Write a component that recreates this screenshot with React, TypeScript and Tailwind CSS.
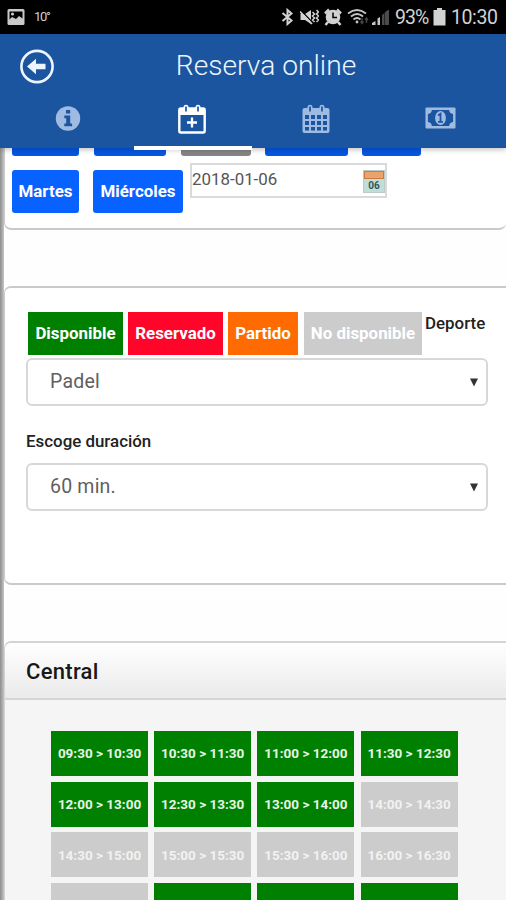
import type { ReactNode } from "react";

type SlotData = { label: string; free: boolean };

const SLOTS: SlotData[] = [
  { label: "09:30 > 10:30", free: true },
  { label: "10:30 > 11:30", free: true },
  { label: "11:00 > 12:00", free: true },
  { label: "11:30 > 12:30", free: true },
  { label: "12:00 > 13:00", free: true },
  { label: "12:30 > 13:30", free: true },
  { label: "13:00 > 14:00", free: true },
  { label: "14:00 > 14:30", free: false },
  { label: "14:30 > 15:00", free: false },
  { label: "15:00 > 15:30", free: false },
  { label: "15:30 > 16:00", free: false },
  { label: "16:00 > 16:30", free: false },
  { label: "", free: false },
  { label: "", free: true },
  { label: "", free: true },
  { label: "", free: true },
];

function StatusBar() {
  return (
    <div className="flex h-[34px] shrink-0 items-center bg-black text-[#d2d2d2]">
      <svg className="ml-[7px] h-[18px] w-[18px]" viewBox="0 0 18 18">
        <rect x="0.5" y="1" width="17" height="16" rx="1.5" fill="#c8c8c8" />
        <path d="M2.500 3.500h13v7l-3.500-2.500-3 3-4-2L2.500 11.500z" fill="#000" />
        <circle cx="5.500" cy="6" r="1.600" fill="#c8c8c8" />
      </svg>
      <span className="ml-[9px] w-[16px] whitespace-nowrap text-[13px] leading-[34px] tracking-[-1.3px]">10°</span>
      <div className="ml-auto flex items-center">
        <svg className="h-[18px] w-[13px]" viewBox="0 0 13 18" fill="none" stroke="#d2d2d2" strokeWidth="2">
          <path d="M1.500 5l9 7.500L6.500 16V2l4 3.500L1.500 13" />
        </svg>
        <svg className="ml-[6px] h-[18px] w-[19px]" viewBox="0 0 19 18">
          <path d="M0.500 6h4.500L11 2v14L5 12H0.500z" fill="#d2d2d2" />
          <path d="M1 2.500l12 12.500" stroke="#000" strokeWidth="1.300" />
          <path d="M0 3.500l12 12.500" stroke="#d2d2d2" strokeWidth="1.700" />
          <path d="M12.500 4l2 2-2 2 2 2-2 2 2 2M16.500 2l2 2-2 2 2 2-2 2 2 2-2 2" fill="none" stroke="#d2d2d2" strokeWidth="1.500" />
        </svg>
        <svg className="ml-[5px] h-[18px] w-[18px]" viewBox="0 0 18 18" fill="none">
          <path d="M1 5.500L5 1.500M17 5.500l-4-4M4 14l-2.500 3M14 14l2.500 3" stroke="#d2d2d2" strokeWidth="2.500" />
          <circle cx="9" cy="9" r="7.300" fill="#d2d2d2" />
          <path d="M9 4.500V9.500h4" stroke="#000" strokeWidth="1.500" />
        </svg>
        <svg className="ml-[5px] h-[18px] w-[23px]" viewBox="0 0 23 18" fill="none" stroke="#c6c6c6" strokeWidth="1.800">
          <path d="M1 5.500Q10 -1.500 19 5.500M4 8.500Q10 3.500 16 8.500M6.500 11.500Q10 8.500 13.500 11.500" />
          <circle cx="10" cy="14" r="1.400" fill="#c6c6c6" stroke="none" />
          <path d="M15 10v5M13.500 13.500L15 15.500l1.500-2M19.500 15V10M18 12l1.500-2 1.500 2" stroke="#444" strokeWidth="1.400" />
        </svg>
        <svg className="ml-[2px] h-[17px] w-[18px]" viewBox="0 0 18 17">
          <path d="M0 16v-2l3.500-2v4zM5.500 16v-6.500L8 8v8z" fill="#c6c6c6" />
          <path d="M10 16V6l2.500-2v12zM13 16V3l4-2.500V16z" fill="#4b4b4b" />
        </svg>
        <span className="ml-[5px] w-[34px] whitespace-nowrap pt-[1px] text-[19.500px] leading-[34px] tracking-[-0.9px]">93%</span>
        <svg className="ml-[4px] h-[18px] w-[13px]" viewBox="0 0 12 18">
          <path d="M3.500 0h5v2H12v15.500H0V2h3.500z" fill="#d2d2d2" />
        </svg>
        <span className="ml-[5px] mr-[8px] w-[47px] whitespace-nowrap pt-[1px] text-[19.500px] leading-[34px] tracking-[-0.4px]">10:30</span>
      </div>
    </div>
  );
}

function Tab({ active, children }: { active?: boolean; children: ReactNode }) {
  return (
    <div className={active ? "relative flex w-[124px] justify-center" : "relative flex w-[124px] justify-center opacity-70"}>
      {children}
      {active && <div className="absolute bottom-[-2px] left-[4px] h-[4px] w-[118px] bg-white" />}
    </div>
  );
}

function Header() {
  return (
    <header className="relative z-10 flex h-[114px] shrink-0 flex-col bg-[#1b559f] shadow-[0_2px_5px_rgba(0,0,0,0.22)]">
      <div className="relative flex h-[65px] items-center justify-center pl-[26px]">
        <svg className="absolute left-[19px] top-[15px] h-[36px] w-[36px]" viewBox="0 0 36 36">
          <circle cx="18" cy="17.500" r="15.600" fill="none" stroke="#eef5ff" strokeWidth="2.600" />
          <path d="M8 17.500l9-7.800v5h9.500v5.600H17v5z" fill="#eef5ff" />
        </svg>
        <h1 className="whitespace-nowrap text-[28.200px] font-light leading-none text-[#edf4fc]">Reserva online</h1>
      </div>
      <nav className="flex h-[49px] pl-[6px]">
        <Tab>
          <svg className="mt-[6px] h-[26px] w-[26px]" viewBox="0 0 26 26">
            <circle cx="13" cy="13.500" r="12.200" fill="#d7e7ff" />
            <path d="M11 5h4.200v3.500H11zM9.300 10.500h5.900v8h1.900v2.800H9.300v-2.800h1.900v-5.200H9.300z" fill="#1b559f" />
          </svg>
        </Tab>
        <Tab active>
          <svg className="mt-[5px] h-[30px] w-[28px]" viewBox="0 0 28 30" fill="none">
            <rect x="1.300" y="4.500" width="25.400" height="24" rx="1.500" stroke="#fff" strokeWidth="2.400" />
            <path d="M1 5h26v6H1z" fill="#fff" />
            <rect x="5.500" y="0.800" width="5" height="7.500" rx="2.500" fill="#fff" />
            <rect x="17.500" y="0.800" width="5" height="7.500" rx="2.500" fill="#fff" />
            <path d="M8 2.500v5M20 2.500v5" stroke="#1b559f" strokeWidth="1.700" />
            <path d="M14 13.500v10M9 18.500h10" stroke="#fff" strokeWidth="2.300" />
          </svg>
        </Tab>
        <Tab>
          <svg className="mt-[5px] h-[30px] w-[28px]" viewBox="0 0 28 30" fill="none">
            <rect x="0.500" y="4" width="27" height="25" rx="2" fill="#d7e7ff" />
            <rect x="5.500" y="0.800" width="5" height="7.500" rx="2.500" fill="#d7e7ff" />
            <rect x="17.500" y="0.800" width="5" height="7.500" rx="2.500" fill="#d7e7ff" />
            <path d="M8 2.500v5M20 2.500v5" stroke="#1b559f" strokeWidth="1.700" />
            <path
              d="M3 11h4v4H3zM9 11h4v4H9zM15 11h4v4h-4zM21 11h4v4h-4zM3 17h4v4H3zM9 17h4v4H9zM15 17h4v4h-4zM21 17h4v4h-4zM3 23h4v3.500H3zM9 23h4v3.500H9zM15 23h4v3.500h-4zM21 23h4v3.500h-4z"
              fill="#1b559f"
            />
          </svg>
        </Tab>
        <Tab>
          <svg className="mt-[8px] h-[22px] w-[31px]" viewBox="0 0 32 22" fill="none" preserveAspectRatio="none">
            <rect x="0.500" y="0.500" width="31" height="21" rx="1" fill="#d7e7ff" />
            <path d="M7 3h18q0 3.500 4 4v8q-4 0.500-4 4H7q0-3.500-4-4V7q4-0.500 4-4z" fill="#1b559f" />
            <ellipse cx="16" cy="11" rx="5.600" ry="7" fill="#d7e7ff" />
            <path d="M13.500 8.500l2.500-1.800v8M13.500 14.800h5" stroke="#1b559f" strokeWidth="1.800" />
          </svg>
        </Tab>
      </nav>
    </header>
  );
}

function SelectBox({ value }: { value: string }) {
  return (
    <div className="flex h-[48px] w-[462px] items-center justify-between rounded-[6px] border-2 border-[#d8d8d8] bg-white pl-[22px] pr-[8px]">
      <span className="whitespace-nowrap text-[19.500px] font-normal leading-none tracking-[0.2px] text-[#606060]">{value}</span>
      <svg className="h-[9px] w-[8px]" viewBox="0 0 8 9">
        <path d="M0 0.500h8L4 8.500z" fill="#333" />
      </svg>
    </div>
  );
}

function DayPicker() {
  return (
    <section className="h-[82px] shrink-0 rounded-b-[7px] border-b-2 border-l border-[#cacaca] bg-white pl-[7px]">
      <div className="flex h-[8px]">
        <div className="w-[67px] rounded-b-[3px] bg-[#0557e2]" />
        <div className="ml-[15px] w-[72px] rounded-b-[3px] bg-[#0557e2]" />
        <div className="ml-[15px] w-[70px] rounded-b-[3px] bg-[#858585]" />
        <div className="ml-[14px] w-[83px] rounded-b-[3px] bg-[#0557e2]" />
        <div className="ml-[14px] w-[59px] rounded-b-[3px] bg-[#0557e2]" />
      </div>
      <div className="flex pt-[7px]">
        <button className="mt-[7px] h-[43px] w-[67px] whitespace-nowrap rounded-[3px] bg-[#0862ff] text-[16.900px] font-bold text-white">Martes</button>
        <button className="ml-[14px] mt-[7px] h-[43px] w-[90px] whitespace-nowrap rounded-[3px] bg-[#0862ff] text-[16.900px] font-bold text-white">Miércoles</button>
        <div className="ml-[7px] flex h-[35px] w-[197px] justify-between border-2 border-[#dadada] bg-white">
          <span className="whitespace-nowrap text-[16.900px] leading-[28px] text-[#555]">2018-01-06</span>
          <div className="mt-[5px] flex h-[23px] w-[22px] flex-col border border-[#bdcbc6] bg-[#bfded8]">
            <div className="h-[8px] border border-[#cc7944] bg-[#eba36c]" />
            <span className="text-center text-[10px] font-bold leading-[13px] text-[#355654]">06</span>
          </div>
        </div>
      </div>
    </section>
  );
}

function BookingOptions() {
  return (
    <section className="mt-[56px] h-[299px] shrink-0 rounded-l-[7px] border-y-2 border-l border-[#cacaca] bg-white pl-[21px] pt-[24px] text-[16.900px] font-bold">
      <div className="flex h-[46px] pl-[2px] text-white">
        <span className="flex h-[43px] w-[95px] items-center justify-center whitespace-nowrap bg-[#008000]">Disponible</span>
        <span className="ml-[5px] flex h-[43px] w-[95px] items-center justify-center whitespace-nowrap bg-[#ff0529]">Reservado</span>
        <span className="ml-[5px] flex h-[43px] w-[70px] items-center justify-center whitespace-nowrap bg-[#ff6b00]">Partido</span>
        <span className="ml-[6px] flex h-[43px] w-[118px] items-center justify-center whitespace-nowrap bg-[#cccccc]">No disponible</span>
        <label className="ml-[3px] whitespace-nowrap text-[16.900px] font-medium leading-[22px] text-[#222]">Deporte</label>
      </div>
      <SelectBox value="Padel" />
      <label className="block h-[57px] pt-[23px] text-[16.900px] font-medium leading-[24px] text-[#222]">Escoge duración</label>
      <SelectBox value="60 min." />
    </section>
  );
}

function Court() {
  return (
    <section className="mt-[56px] h-[280px] shrink-0 rounded-tl-[7px] border-l border-t-2 border-[#d3d3d3] bg-[#f5f5f5]">
      <h2 className="h-[57px] rounded-tl-[6px] border-b-2 border-[#d5d5d5] bg-linear-to-b from-white to-[#eaeaea] pl-[21px] text-[22px] font-medium leading-[57px] tracking-[0.3px] text-[#181818]">
        Central
      </h2>
      <div className="grid grid-cols-[repeat(4,97px)] gap-x-[6.200px] gap-y-[5.600px] pl-[46px] pt-[31px]">
        {SLOTS.map((slot, index) => (
          <div
            key={index}
            className={
              slot.free
                ? "flex h-[45px] items-center justify-center whitespace-nowrap bg-[#008000] text-[13.500px] font-bold text-[#e6f5e6]"
                : "flex h-[45px] items-center justify-center whitespace-nowrap bg-[#cccccc] text-[13.500px] font-bold text-[#f2f2f2]"
            }
          >
            {slot.label}
          </div>
        ))}
      </div>
    </section>
  );
}

export default function App() {
  return (
    <div className="flex h-[900px] w-[506px] flex-col overflow-hidden bg-white font-[Roboto,sans-serif]">
      <StatusBar />
      <Header />
      <div className="flex min-h-0 flex-1">
        <div className="w-[4px] shrink-0 bg-linear-to-r from-[#8d8d8d] to-[#c5c5c5]" />
        <main className="flex min-w-0 flex-1 flex-col overflow-hidden bg-[#fefefe]">
          <DayPicker />
          <BookingOptions />
          <Court />
        </main>
      </div>
    </div>
  );
}
